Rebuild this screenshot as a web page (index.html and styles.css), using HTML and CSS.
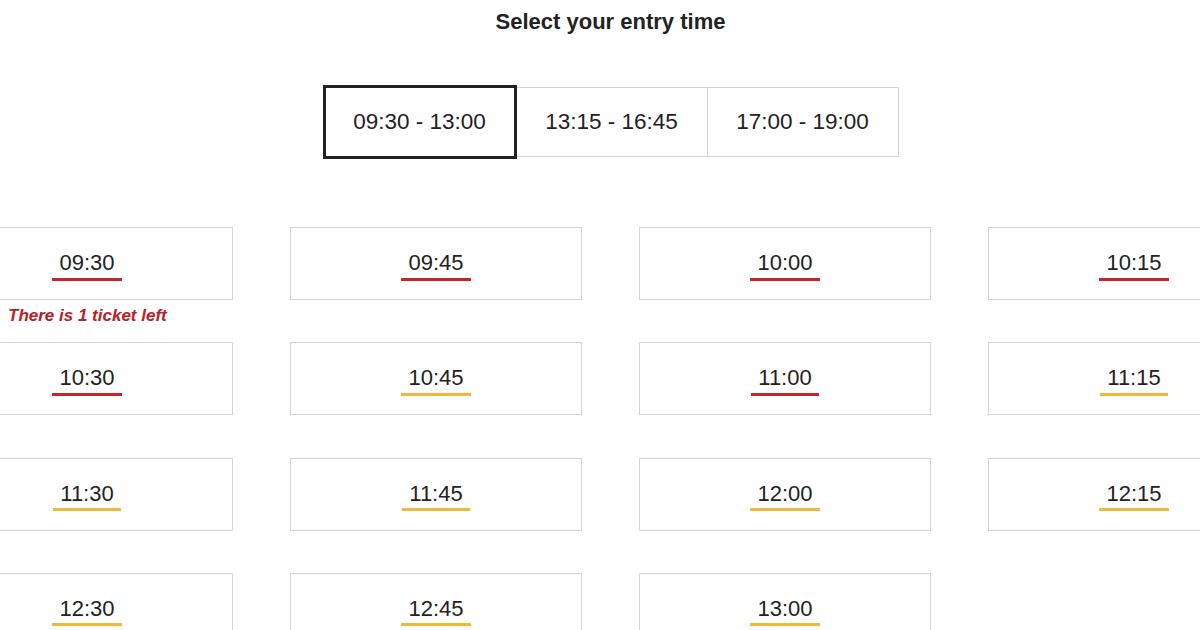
FILE: index.html
```html
<!DOCTYPE html>
<html lang="en">
<head>
<meta charset="utf-8">
<title>Select your entry time</title>
<link rel="stylesheet" href="styles.css">
</head>
<body>
<main class="page">
  <h1 class="title">Select your entry time</h1>
  <div class="tabs">
    <button class="tab tab-active">09:30 - 13:00</button>
    <button class="tab">13:15 - 16:45</button>
    <button class="tab">17:00 - 19:00</button>
  </div>
  <div class="slots">
    <div class="cell">
      <div class="card"><span class="time low">09:30</span></div>
      <p class="note">There is 1 ticket left</p>
    </div>
    <div class="cell"><div class="card"><span class="time low">09:45</span></div></div>
    <div class="cell"><div class="card"><span class="time low">10:00</span></div></div>
    <div class="cell"><div class="card"><span class="time low">10:15</span></div></div>
    <div class="cell"><div class="card"><span class="time low">10:30</span></div></div>
    <div class="cell"><div class="card"><span class="time mid">10:45</span></div></div>
    <div class="cell"><div class="card"><span class="time low">11:00</span></div></div>
    <div class="cell"><div class="card"><span class="time mid">11:15</span></div></div>
    <div class="cell"><div class="card"><span class="time mid">11:30</span></div></div>
    <div class="cell"><div class="card"><span class="time mid">11:45</span></div></div>
    <div class="cell"><div class="card"><span class="time mid">12:00</span></div></div>
    <div class="cell"><div class="card"><span class="time mid">12:15</span></div></div>
    <div class="cell"><div class="card"><span class="time mid">12:30</span></div></div>
    <div class="cell"><div class="card"><span class="time mid">12:45</span></div></div>
    <div class="cell"><div class="card"><span class="time mid">13:00</span></div></div>
  </div>
</main>
</body>
</html>
```

FILE: styles.css
```css
html, body {
  margin: 0;
  padding: 0;
  background: #ffffff;
  overflow: hidden;
}

body {
  font-family: "Liberation Sans", Arial, Helvetica, sans-serif;
  color: #222222;
  width: 1200px;
  height: 630px;
}

.page {
  width: 1221px;
  display: flex;
  flex-direction: column;
  align-items: center;
}

.title {
  margin: 0;
  padding-top: 10px;
  font-size: 22px;
  line-height: 24px;
  font-weight: 700;
  color: #222222;
}

.tabs {
  margin-top: 51px;
  display: flex;
  align-items: center;
}

.tab {
  box-sizing: border-box;
  width: 192px;
  height: 70px;
  border: 1px solid #d3d3d3;
  background: #ffffff;
  font-family: inherit;
  font-size: 22.5px;
  color: #222222;
  padding: 0;
  margin: 0;
  display: flex;
  align-items: center;
  justify-content: center;
}

.tab + .tab {
  margin-left: -1px;
}

.tab-active {
  width: 194px;
  height: 74px;
  border: 3px solid #222222;
  position: relative;
  z-index: 1;
}

.slots {
  align-self: flex-start;
  margin-top: 68px;
  margin-left: -59px;
  width: 1339px;
  display: grid;
  grid-template-columns: repeat(4, 292px);
  grid-auto-rows: 73px;
  column-gap: 57px;
  row-gap: 42.33px;
}

.cell {
  min-width: 0;
}

.card {
  box-sizing: border-box;
  height: 73px;
  border: 1px solid #d4d4d4;
  background: #ffffff;
  padding-top: 22px;
  text-align: center;
  font-size: 22px;
  line-height: 26px;
  color: #222222;
}

.time {
  padding: 0 7.5px 2.5px;
  border-bottom: 3px solid transparent;
}

.time.low {
  border-bottom-color: #c4262b;
}

.time.mid {
  border-bottom-color: #f0b93b;
}

.note {
  margin: 6px 0 0 67px;
  font-size: 17px;
  line-height: 20px;
  font-weight: 700;
  font-style: italic;
  color: #b82025;
  white-space: nowrap;
}
```
